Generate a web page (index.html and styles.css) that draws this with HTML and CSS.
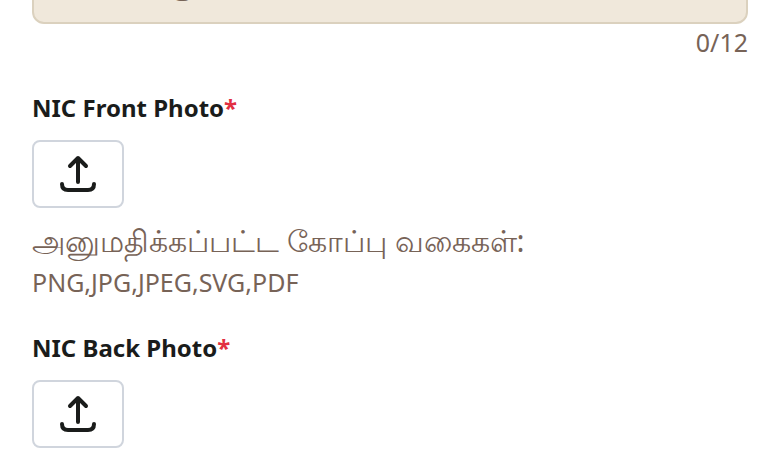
FILE: index.html
```html
<!DOCTYPE html>
<html lang="ta">
<head>
<meta charset="utf-8">
<title>NIC</title>
<link rel="stylesheet" href="styles.css">
</head>
<body>
<form class="form">
  <div class="entry">
    <input class="entry-input" type="text" maxlength="12" aria-label="NIC" placeholder="உங்கள் னு">
    <span class="counter">0/12</span>
  </div>
  <section class="field">
    <label class="label" for="front">NIC Front Photo<span class="required">*</span></label>
    <button class="upload" id="front" type="button">
      <svg class="icon" viewBox="0 0 40 40" aria-hidden="true"><path d="M20 28V4M12 12l8-8 8 8M4 30q0 6 6 6h20q6 0 6-6"/></svg>
    </button>
    <p class="hint"><span class="hint-title">அனுமதிக்கப்பட்ட கோப்பு வகைகள்:</span><br>PNG,JPG,JPEG,SVG,PDF</p>
  </section>
  <section class="field">
    <label class="label" for="back">NIC Back Photo<span class="required">*</span></label>
    <button class="upload" id="back" type="button">
      <svg class="icon" viewBox="0 0 40 40" aria-hidden="true"><path d="M20 28V4M12 12l8-8 8 8M4 30q0 6 6 6h20q6 0 6-6"/></svg>
    </button>
  </section>
</form>
</body>
</html>
```
FILE: styles.css
```css
* { box-sizing: border-box; }
body { margin: 0; background: #fff; color: #1a1c1b; font-family: "Noto Sans", sans-serif; overflow: hidden; }
.form { padding: 0 32px; }
.entry { display: flex; flex-direction: column; }
.entry-input { height: 84px; margin-top: -60px; border: 2px solid #dbd1be; border-radius: 12px; background: #f0e8db; padding: 0 28px 4px; font: inherit; font-size: 30px; }
.entry-input::placeholder { color: #776357; opacity: 1; }
.counter { align-self: flex-end; margin-bottom: 2px; font-size: 25px; line-height: 36px; color: #776357; }
.field { display: flex; flex-direction: column; align-items: flex-start; margin-top: 26px; }
.label { font-size: 24px; line-height: 40px; font-weight: 700; }
.required { color: #e22f42; }
.upload { display: flex; align-items: center; justify-content: center; width: 92px; height: 68px; margin-top: 12px; padding: 0; border: 2px solid #d0d5dd; border-radius: 8px; background: #fff; color: inherit; }
.icon { width: 40px; height: 40px; fill: none; stroke: currentColor; stroke-width: 4; stroke-linecap: round; stroke-linejoin: round; }
.hint { margin: 14px 0 0; font-size: 25px; line-height: 40px; color: #776357; }
.hint-title { font-size: 30px; line-height: 32px; }
```
